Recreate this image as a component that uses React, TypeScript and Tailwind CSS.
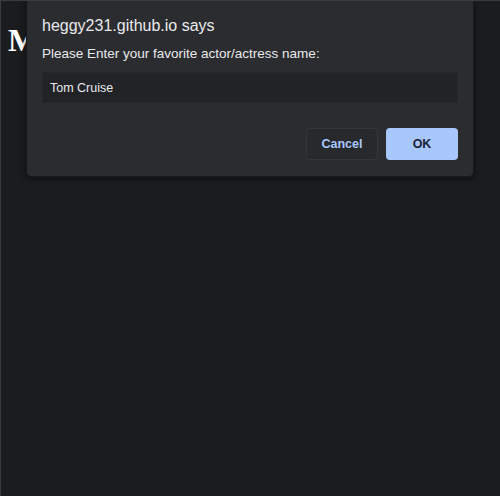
export default function App() {
  return (
    <div className="relative w-[500px] h-[496px] overflow-hidden bg-[#1b1c1e] border-l border-t border-[#3a3b3e]">
      <h1 className="pt-[21px] pl-[7px] text-[32px] leading-[37px] font-bold text-white font-['Liberation_Serif',serif]">
        Movies
      </h1>

      <div className="absolute left-[25px] top-[-2px] w-[448px] h-[178px] bg-[#2b2c2f] border border-[#17181a] rounded-b-[5px] shadow-[0_2px_6px_rgba(0,0,0,0.5)] px-[15px] pt-[16px] font-['Liberation_Sans',Arial,sans-serif]">
        <div className="text-[16px] leading-[20px] text-[#e8eaed]">heggy231.github.io says</div>
        <div className="mt-[10px] text-[13.5px] leading-[16px] text-[#e8eaed]">
          Please Enter your favorite actor/actress name:
        </div>
        <div className="mt-[10px] h-[31px] bg-[#222326] border border-[#26272a] flex items-center px-[7px] pt-[1px] text-[12.5px] text-[#e8eaed]">
          Tom Cruise
        </div>
        <div className="mt-[25px] flex justify-end gap-[8px]">
          <button className="w-[72px] h-[32px] rounded-[4px] bg-[#28292c] border border-[#36373a] text-[12.5px] font-bold text-[#a8c7fa]">
            Cancel
          </button>
          <button className="w-[72px] h-[32px] rounded-[4px] bg-[#a8c7fa] text-[12.5px] font-bold text-[#1a2238]">
            OK
          </button>
        </div>
      </div>
    </div>
  );
}
